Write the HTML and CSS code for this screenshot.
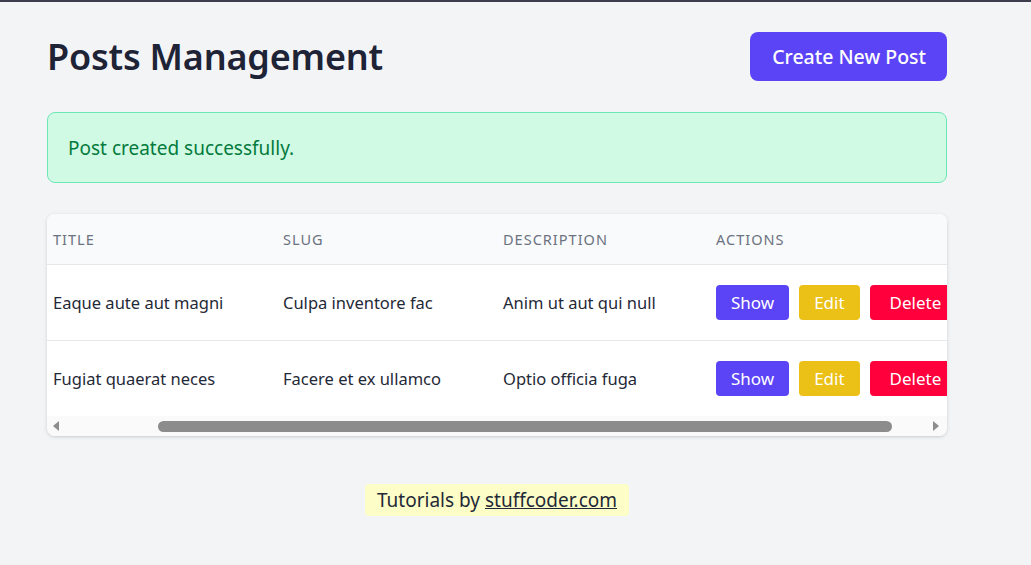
FILE: index.html
```html
<!DOCTYPE html>
<html lang="en">
<head>
    <meta charset="UTF-8">
    <meta name="viewport" content="width=device-width, initial-scale=1.0">
    <title>Posts Management</title>
    <link rel="stylesheet" href="styles.css">
</head>
<body>
    <div class="page">
        <div class="container">
            <div class="page-header">
                <h1>Posts Management</h1>
                <a href="#" class="btn btn-create">Create New Post</a>
            </div>

            <div class="alert">Post created successfully.</div>

            <div class="card">
                <div class="table-scroll">
                    <table>
                        <thead>
                            <tr>
                                <th class="col-title">Title</th>
                                <th class="col-slug">Slug</th>
                                <th class="col-desc">Description</th>
                                <th class="col-actions">Actions</th>
                            </tr>
                        </thead>
                        <tbody>
                            <tr>
                                <td>Eaque aute aut magni</td>
                                <td>Culpa inventore fac</td>
                                <td>Anim ut aut qui null</td>
                                <td>
                                    <div class="actions">
                                        <a href="#" class="btn-sm btn-show">Show</a>
                                        <a href="#" class="btn-sm btn-edit">Edit</a>
                                        <button class="btn-sm btn-delete">Delete</button>
                                    </div>
                                </td>
                            </tr>
                            <tr>
                                <td>Fugiat quaerat neces</td>
                                <td>Facere et ex ullamco</td>
                                <td>Optio officia fuga</td>
                                <td>
                                    <div class="actions">
                                        <a href="#" class="btn-sm btn-show">Show</a>
                                        <a href="#" class="btn-sm btn-edit">Edit</a>
                                        <button class="btn-sm btn-delete">Delete</button>
                                    </div>
                                </td>
                            </tr>
                        </tbody>
                    </table>
                </div>
                <div class="scrollbar">
                    <span class="arrow arrow-left"></span>
                    <div class="track">
                        <div class="thumb"></div>
                    </div>
                    <span class="arrow arrow-right"></span>
                </div>
            </div>

            <div class="footer">
                <span class="credit">Tutorials by <a href="#">stuffcoder.com</a></span>
            </div>
        </div>
    </div>
</body>
</html>
```

FILE: styles.css
```css
body {
    margin: 0;
    font-family: "Noto Sans", "Open Sans", sans-serif;
    background-color: #f3f4f6;
    color: #1f2937;
    border-top: 2px solid #3d3d4e;
    min-height: 563px;
}
.page {
    width: 994px;
}
.container {
    width: 900px;
    margin: 0 auto;
    padding-top: 30px;
}
.page-header {
    display: flex;
    justify-content: space-between;
    align-items: center;
    margin-bottom: 31px;
}
h1 {
    margin: 0;
    font-size: 36px;
    font-weight: 600;
    color: #1e2336;
    letter-spacing: -0.2px;
}
.btn {
    text-decoration: none;
}
.btn-create {
    display: inline-flex;
    align-items: center;
    height: 49px;
    padding: 0 21px 0 22px;
    background-color: #5b44f6;
    color: #fff;
    font-size: 19.5px;
    font-weight: 500;
    border-radius: 8px;
    box-sizing: border-box;
}
.alert {
    height: 71px;
    box-sizing: border-box;
    display: flex;
    align-items: center;
    padding: 0 20px;
    background-color: #d1fae5;
    border: 1px solid #6ee7b7;
    border-radius: 8px;
    color: #047a3c;
    font-size: 19px;
    margin-bottom: 31px;
}
.card {
    background: #fff;
    border-radius: 8px;
    box-shadow: 0 1px 4px rgba(0, 0, 0, 0.12), 0 1px 2px rgba(0, 0, 0, 0.06);
    overflow: hidden;
}
.table-scroll {
    overflow: hidden;
}
table {
    border-collapse: collapse;
    width: 1010px;
    table-layout: fixed;
}
th {
    height: 50px;
    padding: 0 6px;
    text-align: left;
    background-color: #f9fafb;
    color: #6b7280;
    font-size: 14.5px;
    font-weight: 400;
    text-transform: uppercase;
    letter-spacing: 0.07em;
    border-bottom: 1px solid #e5e7eb;
}
.col-title { width: 218px; }
.col-slug { width: 208px; }
.col-desc { width: 201px; }
td {
    height: 75px;
    padding: 0 6px;
    font-size: 16.5px;
    color: #1f2937;
    white-space: nowrap;
    overflow: hidden;
}
tbody tr + tr td {
    border-top: 1px solid #e5e7eb;
}
.actions {
    display: flex;
    gap: 10px;
}
.btn-sm {
    display: inline-flex;
    align-items: center;
    height: 35px;
    padding: 0 15px;
    box-sizing: border-box;
    border: none;
    border-radius: 4px;
    color: #fff;
    font-family: inherit;
    font-size: 17px;
    text-decoration: none;
    cursor: pointer;
}
.btn-show { background-color: #5b44f6; }
.btn-edit { background-color: #ebc017; }
.btn-delete { background-color: #ff003c; padding: 0 20px; }
.scrollbar {
    display: flex;
    align-items: center;
    height: 20px;
    background-color: #fafafa;
}
.arrow {
    width: 20px;
    height: 20px;
    position: relative;
}
.arrow::after {
    content: "";
    position: absolute;
    top: 5px;
    border-top: 5px solid transparent;
    border-bottom: 5px solid transparent;
}
.arrow-left::after {
    left: 6px;
    border-right: 6px solid #8c8c8c;
}
.arrow-right::after {
    right: 8px;
    border-left: 6px solid #8c8c8c;
}
.track {
    flex: 1;
    height: 20px;
    display: flex;
    align-items: center;
    padding-left: 91px;
    padding-right: 35px;
}
.thumb {
    flex: 1;
    height: 11px;
    border-radius: 6px;
    background-color: #8c8c8c;
}
.footer {
    display: flex;
    justify-content: center;
    margin-top: 48px;
}
.credit {
    background-color: #fdfdc8;
    padding: 3px 12px;
    line-height: 26px;
    border-radius: 4px;
    font-size: 19px;
    color: #1f2937;
}
.credit a {
    color: #1f2937;
}
```
